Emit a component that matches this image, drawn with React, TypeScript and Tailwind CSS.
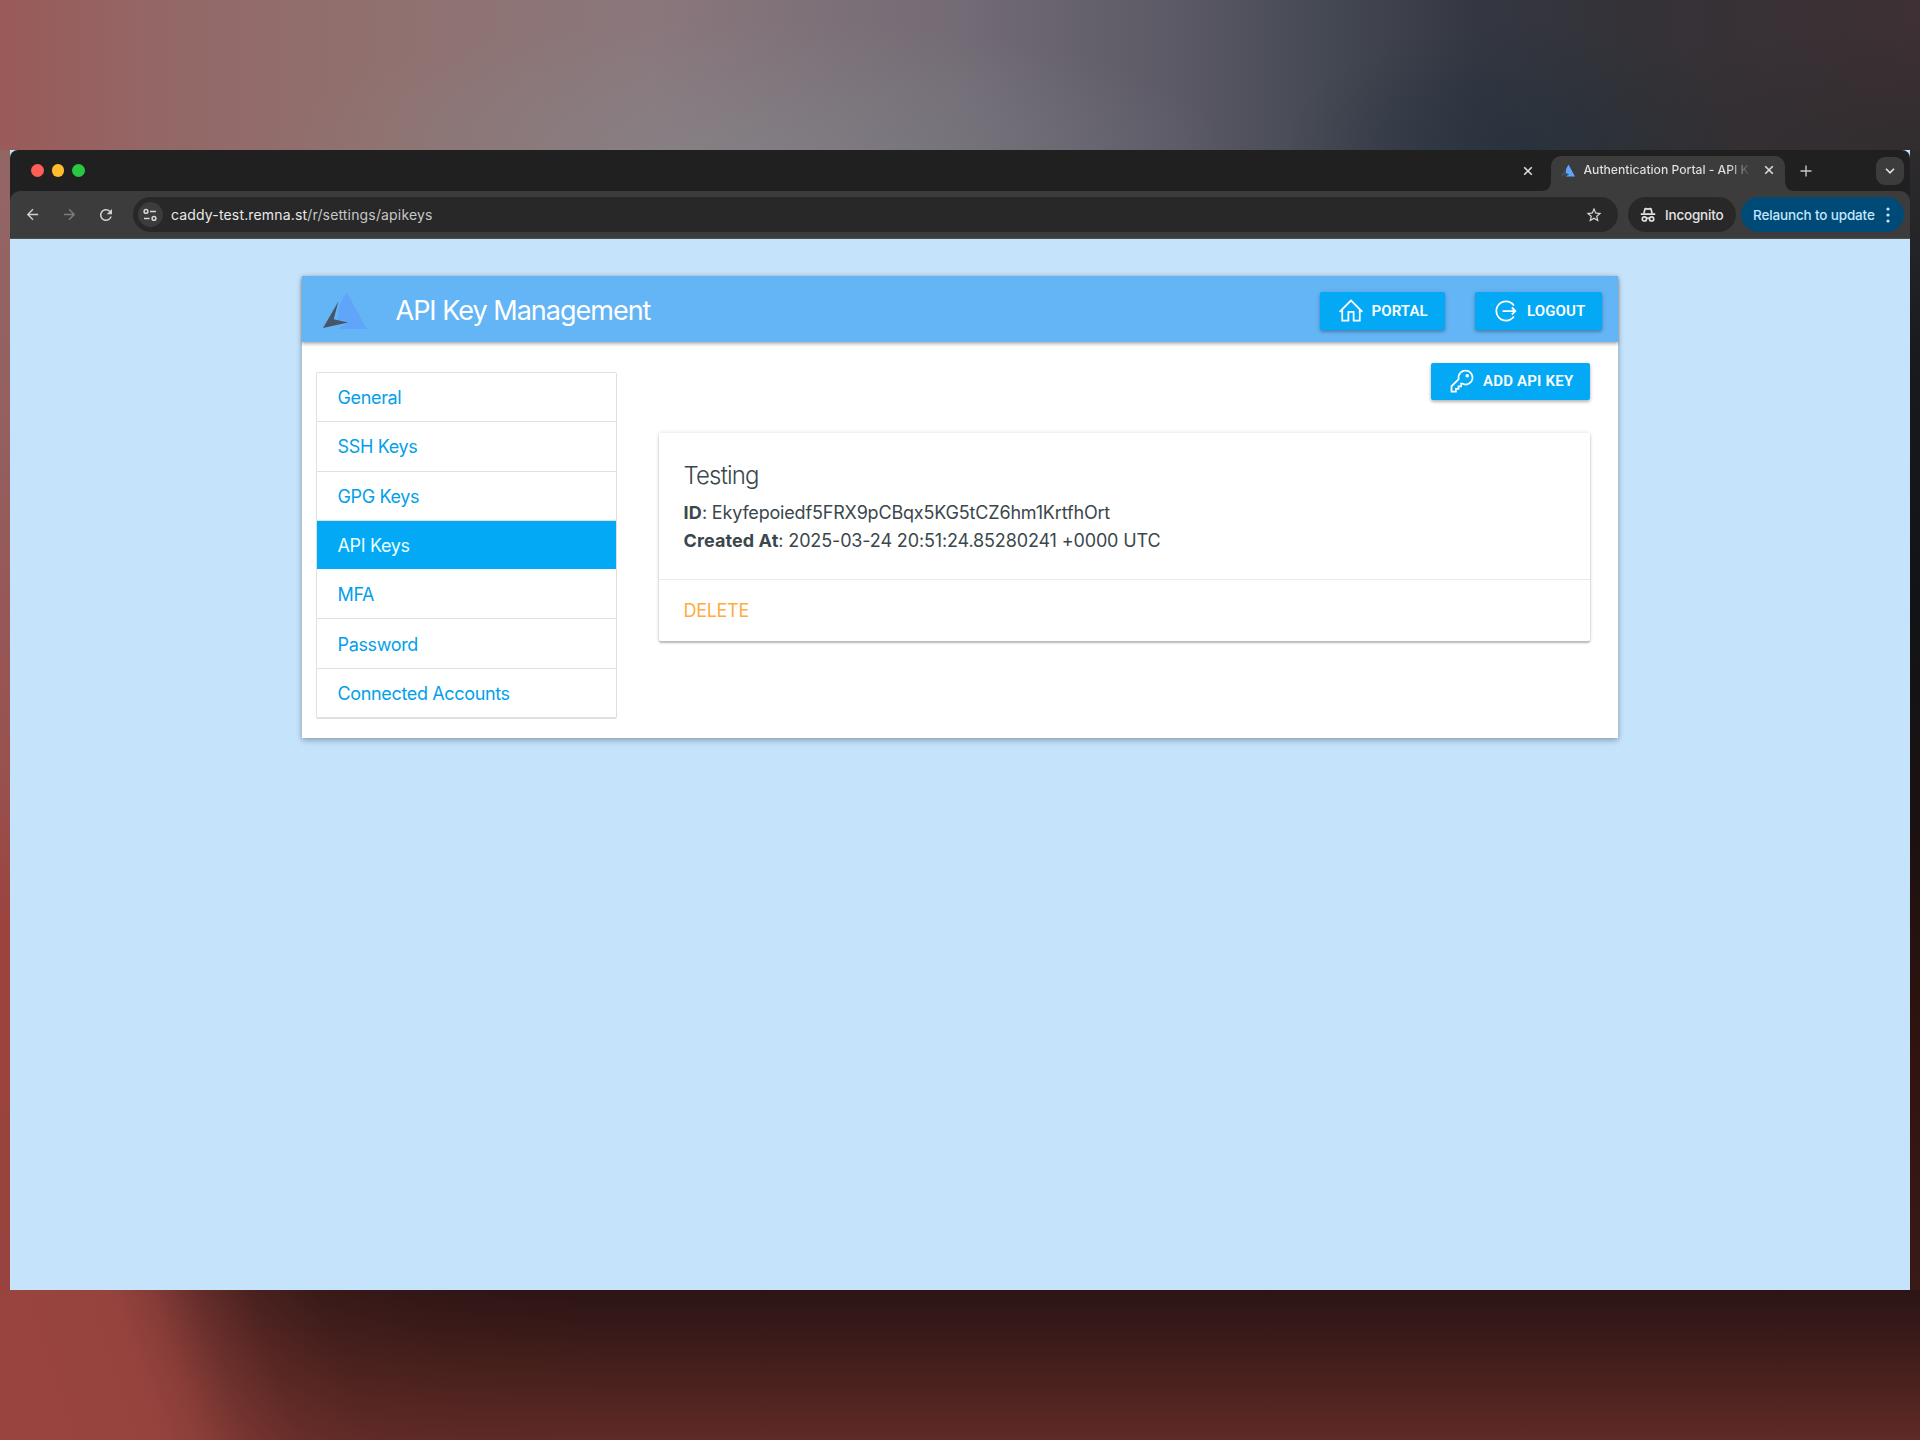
import React from "react";
import { LiaHomeSolid, LiaKeySolid, LiaSignOutAltSolid } from "react-icons/lia";
import { MdArrowBack, MdArrowForward, MdRefresh, MdStarBorder } from "react-icons/md";

const navItems = ["General", "SSH Keys", "GPG Keys", "API Keys", "MFA", "Password", "Connected Accounts"];

function CloseIcon() {
  return (
    <svg viewBox="0 0 10 10" className="size-[10px]" fill="none" stroke="#dcdcdc" strokeWidth="1.6">
      <path d="M1.2 1.2 8.8 8.8M8.8 1.2 1.2 8.8" />
    </svg>
  );
}

function TuneIcon() {
  return (
    <svg viewBox="0 0 14 14" className="size-[14px]" fill="none" stroke="#d6d6d6" strokeWidth="1.5">
      <circle cx="3" cy="3.4" r="1.9" />
      <path d="M7 3.4h6M1 10.4h5.6" />
      <circle cx="11" cy="10.4" r="1.9" />
    </svg>
  );
}

function IncognitoIcon() {
  return (
    <svg viewBox="0 0 16 16" className="size-4" fill="none" stroke="#e3e3e3" strokeWidth="1.7">
      <path d="M3.9 6.4 4.9 2.2Q5.1 1.5 5.8 1.6L8 2.1l2.2-.5q.7-.1.9.6l1 4.2" />
      <path d="M.8 7.2h14.4" />
      <circle cx="4.4" cy="11.9" r="2.1" />
      <circle cx="11.6" cy="11.9" r="2.1" />
      <path d="M6.4 11.4q1.6-.8 3.2 0" />
    </svg>
  );
}

function Logo({ className, dark }: { className: string; dark: string }) {
  return (
    <svg viewBox="0 0 44 37" className={className}>
      <path d="M23.6 0 44 37H14.4L26 30 14.6 27.5 16 14Z" fill="#60a5fa" />
      <path d="M15.4 9.4 10.7 27.3 25.3 30.4 0 36Z" fill={dark} />
    </svg>
  );
}

function TabStrip() {
  return (
    <div className="flex h-[41px] shrink-0 items-end bg-[#202020]">
      <div className="flex h-[41px] items-center gap-[8px] pl-[21px]">
        <span className="size-[12.5px] rounded-full bg-[#ff5f57]" />
        <span className="size-[12.5px] rounded-full bg-[#febc2e]" />
        <span className="size-[12.5px] rounded-full bg-[#28c840]" />
      </div>
      <div className="ml-auto mr-[8px] flex h-[41px] items-center">
        <CloseIcon />
      </div>
      <svg viewBox="0 0 10 10" className="size-[10px]"><path d="M10 0v10H0Q10 10 10 0Z" fill="#3c3c3c" /></svg>
      <div className="flex h-[35px] w-[234px] items-center rounded-t-[10px] bg-[#3c3c3c] pb-[7px] pl-[10px] pr-[11px]">
        <Logo className="h-[13px] w-[14px]" dark="#3f4f69" />
        <span className="ml-[8.5px] w-[168px] whitespace-nowrap bg-linear-to-r from-[#e3e3e3] from-86% to-[#3c3c3c] bg-clip-text text-[12.2px] font-medium leading-[18px] tracking-[-0.03px] text-transparent">
          Authentication Portal - API K
        </span>
        <span className="ml-auto"><CloseIcon /></span>
      </div>
      <svg viewBox="0 0 10 10" className="size-[10px]"><path d="M0 0v10H10Q0 10 0 0Z" fill="#3c3c3c" /></svg>
      <div className="flex h-[41px] w-[115px] items-center justify-between pl-[5px] pr-[6px]">
        <svg viewBox="0 0 12 12" className="size-[12px]" stroke="#c7c7c7" strokeWidth="1.4"><path d="M6 .5v11M.5 6h11" /></svg>
        <span className="flex size-[28px] items-center justify-center rounded-[9px] bg-[#3c3c3c]">
          <svg viewBox="0 0 10 6" className="h-[6px] w-[10px]" fill="none" stroke="#e3e3e3" strokeWidth="1.6"><path d="m1 .8 4 4 4-4" /></svg>
        </span>
      </div>
    </div>
  );
}

function Toolbar() {
  return (
    <div className="bg-[#202020]">
      <div className="flex h-[48px] items-center rounded-t-[10px] border-b border-[#4a4f52] bg-[#3c3c3c] pr-[5px]">
        <MdArrowBack className="ml-[14px] size-[17px] text-[#d0d0d0]" />
        <MdArrowForward className="ml-[20px] size-[17px] text-[#7d7d7d]" />
        <MdRefresh className="ml-[19px] size-[18px] text-[#d0d0d0]" />
        <div className="ml-[18px] flex h-[35px] w-[1485px] items-center rounded-full bg-[#282828] pl-[5px] pr-[15px]">
          <span className="flex size-[25px] items-center justify-center rounded-full bg-[#3c3c3c] pr-px"><TuneIcon /></span>
          <span className="ml-[8px] text-[14px] leading-[20px] tracking-[0.16px] text-[#c7c7c7]">
            <span className="text-[#e8e8e8]">caddy-test.remna.st</span>/r/settings/apikeys
          </span>
          <MdStarBorder className="ml-auto size-[18px] text-[#d6d6d6]" />
        </div>
        <div className="ml-[10px] flex h-[35px] w-[108px] items-center rounded-full bg-[#282828] pl-[12px]">
          <IncognitoIcon />
          <span className="ml-[9px] text-[13.5px] font-medium leading-[20px] tracking-[-0.2px] text-[#e3e3e3]">Incognito</span>
        </div>
        <div className="ml-[5px] flex h-[35px] w-[163px] items-center rounded-full bg-[#004a77] pl-[12px] pr-[14px]">
          <span className="whitespace-nowrap text-[13.5px] font-medium leading-[20px] tracking-[-0.15px] text-[#c2e7ff]">Relaunch to update</span>
          <svg viewBox="0 0 4 16" className="ml-auto h-4 w-1" fill="#c2e7ff">
            <circle cx="2" cy="2" r="1.6" /><circle cx="2" cy="8" r="1.6" /><circle cx="2" cy="14" r="1.6" />
          </svg>
        </div>
      </div>
    </div>
  );
}

const buttonClass =
  "flex h-[37.5px] items-center rounded-[2px] bg-[#03a9f4] font-['Roboto',sans-serif] text-[15px] font-semibold leading-none text-white shadow-[0_2px_3px_rgba(0,0,0,0.2),0_1px_5px_rgba(0,0,0,0.14)]";

function PageCard() {
  return (
    <div className="mx-auto mt-[37px] flex h-[462px] w-[1316px] flex-col bg-white shadow-[0_3px_6px_rgba(0,0,0,0.22),0_0_5px_rgba(0,0,0,0.14)]">
      <header className="flex h-[66px] shrink-0 items-center bg-[#64b5f6] pl-[20.5px] pr-[16px] shadow-[0_2px_3px_rgba(0,0,0,0.3)]">
        <Logo className="mt-[2px] h-[37px] w-[44px]" dark="#475569" />
        <h1 className="ml-[29px] mt-[3px] text-[27px] leading-[36px] tracking-[-1px] text-white">API Key Management</h1>
        <button className={`${buttonClass} ml-auto mt-[4px] w-[125px] pl-[16.5px]`}>
          <LiaHomeSolid className="size-[28px]" />
          <span className="ml-[7px] tracking-[0.1px]">PORTAL</span>
        </button>
        <button className={`${buttonClass} ml-[30px] mt-[4px] w-[127px] pl-[17px]`}>
          <LiaSignOutAltSolid className="size-[28px]" />
          <span className="ml-[7px] tracking-[0.1px]">LOGOUT</span>
        </button>
      </header>
      <div className="flex flex-1">
        <nav className="ml-[14px] mt-[30px] flex h-[347px] w-[301px] flex-col rounded-[2px] border border-[#e0e0e0] border-b-2 bg-white">
          {navItems.map((item) => (
            <a
              key={item}
              className={`flex flex-1 items-center border-b pl-[20.5px] pt-[1px] text-[18px] tracking-[-0.35px] last:border-b-0 ${
                item === "API Keys" ? "border-white bg-[#03a9f4] text-[#eaffff]" : "border-[#e0e0e0] bg-white text-[#03a0ea]"
              }`}
            >
              {item}
            </a>
          ))}
        </nav>
        <main className="ml-[42px] flex w-[931px] flex-col">
          <button className={`${buttonClass} ml-auto mt-[20.5px] w-[159px] pl-[17px]`}>
            <LiaKeySolid className="size-[28px]" />
            <span className="ml-[7px] mt-px tracking-[0.2px]">ADD API KEY</span>
          </button>
          <section className="mt-[32.5px] flex h-[208px] flex-col rounded-[2px] bg-white text-[#3b474c] shadow-[0_2px_2px_rgba(0,0,0,0.24),0_0_4px_rgba(0,0,0,0.14)]">
            <div className="flex h-[147px] flex-col border-b border-[#eaeaea] pl-[24.5px] pt-[24px]">
              <h2 className="text-[24px] font-[350] leading-[37px] tracking-[-0.85px]">Testing</h2>
              <p className="mt-[5.5px] text-[18px] leading-[28px] tracking-[-0.18px]"><b className="font-bold tracking-[0.2px]">ID</b>: Ekyfepoiedf5FRX9pCBqx5KG5tCZ6hm1KrtfhOrt</p>
              <p className="text-[18px] leading-[28px] tracking-[-0.14px]"><b className="font-bold tracking-[0.1px]">Created At</b>: 2025-03-24 20:51:24.85280241 +0000 UTC</p>
            </div>
            <div className="flex flex-1 items-center pl-[24.5px] pt-[1px]">
              <a className="text-[18px] tracking-[-0.3px] text-[#ffab40]">DELETE</a>
            </div>
          </section>
        </main>
      </div>
    </div>
  );
}

export default function App() {
  return (
    <div className="flex h-[1440px] w-[1920px] flex-col overflow-hidden bg-[#3a1a17] font-['Inter',sans-serif]">
      <div className="h-[150px] shrink-0 bg-[linear-gradient(90deg,#9a5a58_0%,#936766_8%,#90716f_20%,#8a777c_34%,#736b75_50%,#5c5a66_61%,#454954_69%,#343742_77%,#343237_85%,#3e3034_100%)]">
        <div className="h-full bg-[radial-gradient(ellipse_480px_130px_at_39%_100%,rgba(130,142,145,0.4),transparent),radial-gradient(ellipse_230px_130px_at_79%_100%,rgba(33,48,59,0.6),transparent),radial-gradient(ellipse_380px_130px_at_100%_100%,rgba(46,44,46,0.8),transparent)]" />
      </div>
      <div className="flex h-[1140px] shrink-0">
        <div className="w-[10px] bg-[linear-gradient(180deg,#936666_0%,#945f5f_25%,#98514f_55%,#9b433f_68%,#98433f_100%)]" />
        <div className="flex w-[1900px] flex-col bg-[#c5e3fb]">
          <div className="overflow-hidden rounded-t-[8px]">
            <TabStrip />
            <Toolbar />
          </div>
          <PageCard />
        </div>
        <div className="w-[10px] bg-[linear-gradient(180deg,#2d2b2e_0%,#1a1a1e_18%,#121317_40%,#1c1110_60%,#32130f_80%,#3a1a17_100%)]" />
      </div>
      <div className="flex-1 bg-[linear-gradient(180deg,#2c1514_0%,#361918_25%,#47201c_55%,#5f2a27_100%)]">
        <div className="h-full bg-[linear-gradient(72deg,#9a443f_0px,#96433e_150px,rgba(146,65,60,0.88)_190px,rgba(130,58,53,0.65)_235px,rgba(115,50,46,0.42)_285px,rgba(100,44,40,0.22)_350px,rgba(90,38,34,0.1)_450px,rgba(90,38,34,0)_600px)]" />
      </div>
    </div>
  );
}
